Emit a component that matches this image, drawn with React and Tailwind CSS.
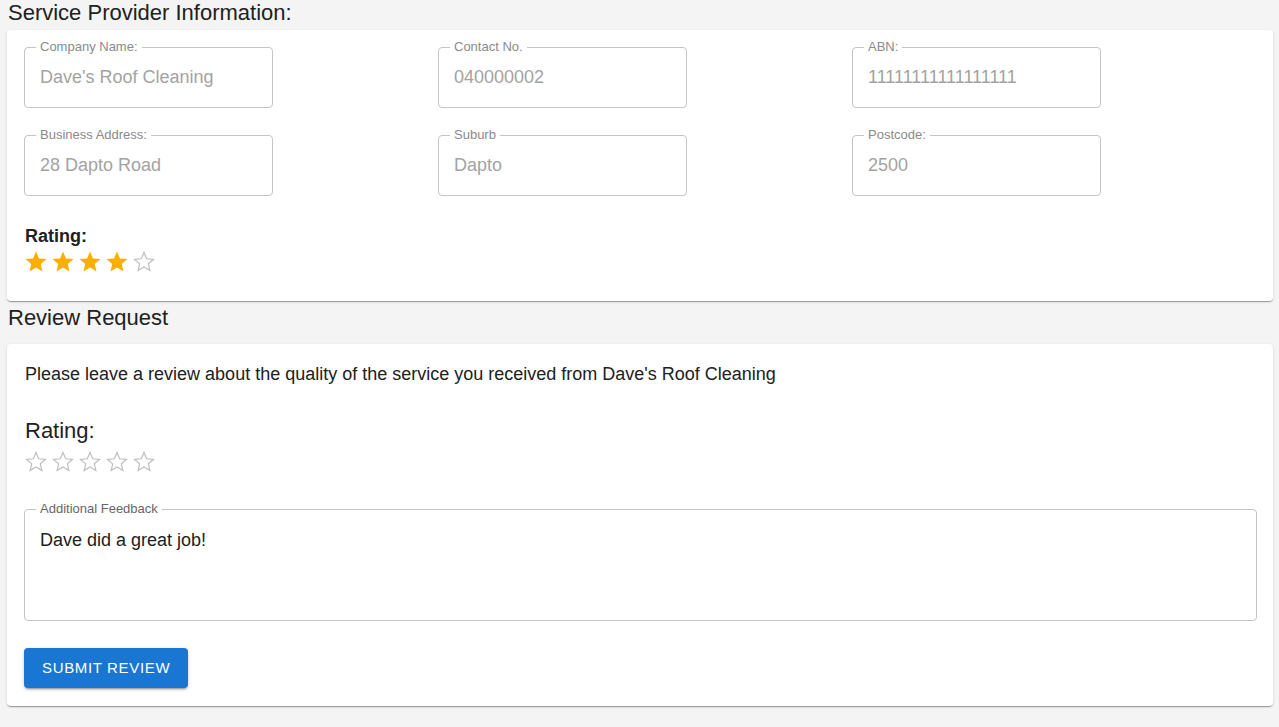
import React from "react";

const FILLED =
	"M12 17.27L18.18 21l-1.64-7.19L22 9.24l-7.19-.61L12 2 9.19 8.63 2 9.24l5.46 4.73L5.82 21z";

const Star = ({ filled }) => (
	<svg width="24" height="24" viewBox="0 0 24 24" className="block">
		{filled ? (
			<path d={FILLED} fill="#faaf00" transform="translate(-0.6 -0.6) scale(1.05)" />
		) : (
			<path
				d={FILLED}
				fill="none"
				stroke="#bdbdbd"
				strokeWidth="1.2"
				transform="translate(0.6 0.6) scale(0.95)"
			/>
		)}
	</svg>
);

const Stars = ({ value }) => (
	<div className="flex gap-[3px]">
		{[1, 2, 3, 4, 5].map((n) => (
			<Star key={n} filled={n <= value} />
		))}
	</div>
);

const Field = ({ label, value }) => (
	<fieldset className="w-[249px] h-[69px] border border-[#c4c4c4] rounded-[4px] px-[11px] m-0 -mt-[8px]">
		<legend className="text-[13px] text-[#8a8a8a] px-[4px] leading-[16px]">
			{label}
		</legend>
		<div className="pl-[4px] pt-[11px] text-[18px] text-[#a3a3a3] leading-[22px]">
			{value}
		</div>
	</fieldset>
);

const fields = [
	{ label: "Company Name:", value: "Dave's Roof Cleaning" },
	{ label: "Contact No.", value: "040000002" },
	{ label: "ABN:", value: "11111111111111111" },
	{ label: "Business Address:", value: "28 Dapto Road" },
	{ label: "Suburb", value: "Dapto" },
	{ label: "Postcode:", value: "2500" },
];

const cardShadow =
	"bg-white rounded-[4px] shadow-[0_2px_1px_-1px_rgba(0,0,0,0.2),0_1px_1px_0_rgba(0,0,0,0.14),0_1px_3px_0_rgba(0,0,0,0.12)]";

export default function App() {
	return (
		<div
			className="min-h-[727px] bg-[#f4f4f4] pl-[7px] pr-[6px] pb-[20px] text-[#212121]"
			style={{ fontFamily: '"Liberation Sans", Arial, sans-serif' }}>
			<h2 className="text-[22px] leading-[26px] pl-[1px]">
				Service Provider Information:
			</h2>
			<div className={`mt-[4px] pl-[17px] pr-[16px] pt-[17px] pb-[27px] ${cardShadow}`}>
				<div className="grid grid-cols-[249px_249px_249px] gap-x-[165px] gap-y-[27px]">
					{fields.map((f) => (
						<Field key={f.label} label={f.label} value={f.value} />
					))}
				</div>
				<div className="mt-[29px] text-[18px] font-bold leading-[22px] pl-[1px]">
					Rating:
				</div>
				<div className="mt-[3px]">
					<Stars value={4} />
				</div>
			</div>

			<h2 className="text-[22px] leading-[26px] pl-[1px] mt-[4px]">
				Review Request
			</h2>
			<div className={`mt-[13px] pl-[17px] pr-[16px] pt-[19px] pb-[18px] ${cardShadow}`}>
				<p className="text-[18px] leading-[22px] pl-[1px]">
					Please leave a review about the quality of the service you received
					from Dave's Roof Cleaning
				</p>
				<div className="mt-[33px] text-[22px] leading-[26px] pl-[1px]">
					Rating:
				</div>
				<div className="mt-[6px]">
					<Stars value={0} />
				</div>
				<fieldset className="mt-[27px] h-[120px] border border-[#c4c4c4] rounded-[4px] px-[11px] m-0">
					<legend className="text-[13px] text-[#666666] px-[4px] leading-[16px]">
						Additional Feedback
					</legend>
					<div className="pl-[4px] pt-[12px] text-[18px] leading-[22px] text-[#212121]">
						Dave did a great job!
					</div>
				</fieldset>
				<button className="mt-[27px] h-[40px] px-[18px] bg-[#1976d2] text-white text-[15px] leading-[40px] uppercase tracking-[0.65px] rounded-[4px] shadow-[0_3px_1px_-2px_rgba(0,0,0,0.2),0_2px_2px_0_rgba(0,0,0,0.14),0_1px_5px_0_rgba(0,0,0,0.12)]">
					Submit Review
				</button>
			</div>
		</div>
	);
}
